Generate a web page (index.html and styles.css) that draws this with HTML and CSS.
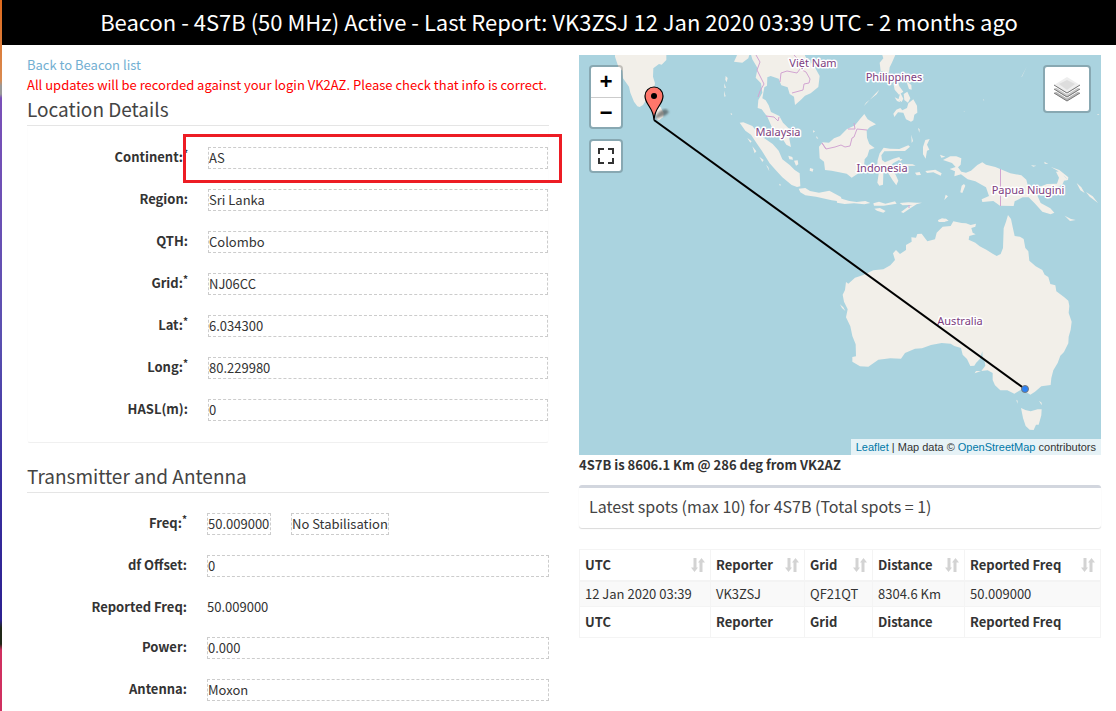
FILE: index.html
```html
<!DOCTYPE html>
<html lang="en">
<head>
<meta charset="utf-8">
<title>Beacon - 4S7B</title>
<link rel="stylesheet" href="styles.css">
</head>
<body>
<svg class="defs" aria-hidden="true">
  <symbol id="sort" viewBox="0 0 14 14"><path d="M2.500 0h3v9.500H7L3.500 14 0 9.500h2.500zM8.500 14h3V4.500H14L10.500 0 7 4.500h1.500z"/></symbol>
</svg>
<header class="title-bar"><h1>Beacon - 4S7B (50 MHz) Active - Last Report: VK3ZSJ 12 Jan 2020 03:39 UTC - 2 months ago</h1></header>
<main class="columns">
  <section class="column">
    <a class="back" href="#">Back to Beacon list</a>
    <p class="warning">All updates will be recorded against your login VK2AZ. Please check that info is correct.</p>
    <h2 class="section-title">Location Details</h2>
    <form class="fields boxed">
      <div class="row marked"><label for="continent">Continent:<sup>*</sup></label><input id="continent" value="AS"></div>
      <div class="row"><label for="region">Region:</label><input id="region" value="Sri Lanka"></div>
      <div class="row"><label for="qth">QTH:</label><input id="qth" value="Colombo"></div>
      <div class="row"><label for="grid">Grid:<sup>*</sup></label><input id="grid" value="NJ06CC"></div>
      <div class="row"><label for="lat">Lat:<sup>*</sup></label><input id="lat" value="6.034300"></div>
      <div class="row"><label for="long">Long:<sup>*</sup></label><input id="long" value="80.229980"></div>
      <div class="row"><label for="hasl">HASL(m):</label><input id="hasl" value="0"></div>
    </form>
    <h2 class="section-title second">Transmitter and Antenna</h2>
    <form class="fields">
      <div class="row"><label for="freq">Freq:<sup>*</sup></label><div class="pair"><input id="freq" class="freq" value="50.009000"><input class="stability" aria-label="Stabilisation" value="No Stabilisation"></div></div>
      <div class="row"><label for="offset">df Offset:</label><input id="offset" value="0"></div>
      <div class="row"><label for="reported">Reported Freq:</label><output id="reported">50.009000</output></div>
      <div class="row"><label for="power">Power:</label><input id="power" value="0.000"></div>
      <div class="row"><label for="antenna">Antenna:</label><input id="antenna" value="Moxon"></div>
    </form>
  </section>
  <section class="column">
    <div class="map">
      <svg class="map-canvas" viewBox="579 55 522 400" preserveAspectRatio="xMidYMid slice" role="img" aria-label="Map from Sri Lanka to Australia">
        <defs><filter id="soft"><feGaussianBlur stdDeviation="1"/></filter></defs>
        <rect x="-500" y="55" width="3000" height="400" fill="#aad3df"/>
        <g class="land" transform="translate(579 50) scale(.33333)">
          <path d="M108 0L108 20 118 50 130 62 132 85 150 110 154 128 165 155 175 169 182 171 192 165 198 155 208 150 223 125 228 100 222 80 223 55 240 42 248 44 262 30 262 0z"/>
          <path d="M233 160L245 172 254 188 253 201 240 211 233 207 230 185z"/>
          <path d="M465 35L472 20 480 0 515 0 508 25 490 38z"/>
          <path d="M512 0L520 28 536 55 530 83 546 100 550 128 538 150 536 174 548 178 565 200 578 230 600 250 622 284 636 291 631 267 632 238 612 218 601 198 576 186 569 166 560 151 550 145 556 112 564 107 565 82 575 78 599 86 607 106 626 112 632 132 645 140 648 165 666 149 678 137 695 130 718 111 722 78 705 47 682 25 670 0z"/>
          <path d="M482 218L493 217 520 228 537 248 556 265 581 282 599 302 610 328 633 346 647 360 662 370 664 409 654 411 638 405 610 382 592 362 572 340 549 303 532 278 516 254 499 242z"/>
          <path d="M659 416L679 414 693 423 720 428 751 422 786 441 790 455 758 451 711 440 679 436 664 427z"/>
          <path d="M645 332L656 331 658 343 651 347zM628 317L640 321 642 329 631 328zM693 354L703 357 701 365 692 362zM505 264L518 274 514 278zM520 289L532 304 527 310zM541 320L554 330 550 336zM561 344L568 352 571 364zM440 78L446 84 443 97 439 89zM435 122L440 139 436 140zM436 100L441 114 436 113zM455 188L460 193 456 195zM600 401L606 404 603 408zM702 241L708 244 703 248zM713 258L718 267 712 264z"/>
        </g>
        <g class="land" transform="translate(840 50) scale(.33333)">
          <path d="M-63 290L-52 277-33 278-18 265 0 258 20 238 45 226 60 207 73 192 83 208 108 223 90 231 80 241 81 263 88 282 104 294 88 299 82 319 74 328 72 350 52 372 35 383 20 371 5 368-25 362-45 360-48 335-61 325z"/>
          <path d="M122 0L130 25 119 38 122 63 147 68 149 52 155 40 166 15 164 0zM78 158L110 133 118 119 106 131 72 168zM160 100L174 96 178 109 190 125 177 134 164 119zM181 128L190 146 185 156 175 149zM191 132L202 125 211 145 204 158 193 150zM199 94L214 105 215 119 207 117zM160 191L169 179 181 174 187 181 201 174 205 160 220 148 231 167 232 188 223 194 220 211 213 215 198 208 190 188 174 187 163 201zM164 142L175 147 181 157 171 153z"/>
          <path d="M119 310L131 293 150 296 178 297 205 286 210 290 195 303 169 303 133 304 124 316 126 330 135 337 160 326 178 321 181 328 159 340 150 351 167 374 175 392 169 406 158 391 143 367 137 359 130 371 129 404 118 407 112 398 116 371 111 353 113 330z"/>
          <path d="M249 291L256 270 269 267 261 284 268 299 261 302 257 326 249 313zM225 368L239 366 243 375 230 376zM256 363L286 359 305 370 302 377 280 367 261 369zM187 342L218 343 227 347 190 348zM174 326L188 327 181 334zM300 314L316 320 304 323zM365 407L372 402 376 407 367 429 361 427zM317 434L324 439 313 450zM234 234L239 238 238 248zM214 254L219 273 215 279z"/>
          <path d="M309 330L331 319 349 319 364 325 362 344 354 352 364 365 378 368 393 362 412 345 427 337 438 344 466 351 511 370 544 376 559 389 563 405 583 419 590 432 602 459 631 475 643 488 632 493 607 485 584 460 566 442 548 442 524 454 521 468 480 467 460 453 427 456 425 448 447 438 438 412 406 394 383 388 363 373 343 379 345 364 329 357 347 351 336 339z"/>
          <path d="M600 410L621 402 651 401 657 383 648 365 661 364 675 382 684 390 672 392 667 404 646 414 611 421zM633 351L658 360 685 382 684 390 664 369zM710 399L724 412 734 429 721 421zM738 426L758 439 774 459 749 440zM674 497L693 507 707 510 690 513zM573 346L589 347 580 350zM613 335L625 342 614 341z"/>
          <path d="M-10 448L5 446 28 453 50 456 76 453 91 459 73 463 42 460 14 462-9 458zM100 460L117 455 136 461 165 454 170 461 131 467 102 467zM179 459L205 457 230 458 246 458 224 464 188 466zM103 476L120 474 137 483 130 488 111 482zM183 486L207 468 232 461 212 474 190 489z"/>
          <path d="M294 511L306 505 320 507 314 516 298 514zM371 183L373 183 373 186zM544 82L560 50 546 80zM429 148L433 151 429 151zM770 193L778 192 775 195z"/>
        </g>
        <g class="land" transform="translate(820 200) scale(.33333)">
          <path d="M75 270L78 246 85 251 105 233 130 225 160 211 190 208 211 196 225 180 219 160 228 150 240 162 258 150 258 135 275 125 274 112 288 113 292 102 305 101 322 124 345 118 350 98 368 80 392 78 400 64 425 69 438 70 452 75 468 71 466 80 454 84 458 98 467 103 448 108 446 119 466 128 479 139 499 149 518 161 530 168 542 162 549 144 551 85 558 65 564 45 573 57 578 81 584 108 600 110 611 117 616 144 625 154 628 182 647 199 667 210 674 224 685 231 691 252 706 256 709 274 732 291 745 302 748 318 746 339 755 365 752 389 746 410 745 430 732 456 721 467 713 489 700 511 694 534 692 555 664 559 645 575 631 584 620 577 605 568 583 581 562 571 541 571 525 556 518 540 518 519 503 511 483 513 464 520 468 513 484 513 496 497 493 478 488 476 487 454 480 476 468 489 463 497 451 498 441 477 428 464 423 444 403 438 392 431 365 429 333 435 306 445 285 446 255 459 243 476 211 475 175 479 145 500 120 499 97 485 97 471 108 469 107 433 97 408 91 379 78 352 83 328 72 305 68 284z"/>
          <path d="M603 624L616 630 632 634 653 628 665 628 664 646 656 674 648 674 641 690 629 689 617 678 609 654zM657 602L665 608 665 616zM589 599L593 602 592 611zM60 313L70 322 76 333 66 324zM354 60L378 56 386 62 370 66 356 66z"/>
        </g>
        <g class="borders">
          <path d="M756 55L760 62 757 70 764 84 760 91 758 97M766 116L774 117 778 121 779 117M780 82L781 73 787 71 797 73 800 69 806 72 810 79 809 83 804 84 803 90 792 93M794 55L805 67M822 143L826 149 835 147 841 145 845 147 850 146 852 138 854 137 857 129 867 130M854 123L855 129 848 129M1000.500 169v37M909 205v3M822 143L826 149"/>
        </g>
        <g class="places">
          <text x="813" y="67">Việt Nam</text>
          <text x="894" y="81">Philippines</text>
          <text x="778" y="136">Malaysia</text>
          <text x="882" y="172">Indonesia</text>
          <text x="1028" y="194">Papua Niugini</text>
          <text x="960" y="325">Australia</text>
        </g>
        <path d="M655 119C656 114 660 110 666 109L669 112 666 115z" fill="#333" opacity=".55" filter="url(#soft)"/>
        <path d="M654 120L1025 389" stroke="#000" stroke-width="2"/>
        <path d="M654 120C653.500 107 645 105 645 96A9 9 0 0 1 663 96C663 105 654.500 107 654 120z" fill="#ff776b" stroke="#000" stroke-width="1.200"/>
        <circle cx="654" cy="96" r="3"/>
        <circle cx="1025" cy="389" r="3.500" fill="#2b82f6" stroke="#777" stroke-width="1"/>
      </svg>
      <div class="controls left">
        <div class="control"><button type="button" class="zoom" aria-label="Zoom in">+</button><button type="button" class="zoom" aria-label="Zoom out">−</button></div>
        <div class="control"><button type="button" aria-label="Full screen"><svg width="16" height="16" viewBox="0 0 16 16"><path d="M1 6V1h5M10 1h5v5M15 10v5h-5M6 15H1v-5" fill="none" stroke="#333" stroke-width="2"/></svg></button></div>
      </div>
      <div class="controls right">
        <div class="control"><button type="button" class="layers" aria-label="Layers"><svg width="26" height="26" viewBox="0 0 26 26"><path d="M0 17L13 9l13 8-13 8z" fill="#b5b5b5"/><path d="M0 17l13 8 13-8" fill="none" stroke="#777"/><path d="M0 13L13 5l13 8-13 8z" fill="#c8c8c8"/><path d="M0 14l13 8 13-8" fill="none" stroke="#fff"/><path d="M0 13l13 8 13-8" fill="none" stroke="#777"/><path d="M0 9L13 1l13 8-13 8z" fill="#eee"/><path d="M5 8l8-4 8 4-8 6z" fill="#ddd"/><path d="M0 10l13 8 13-8" fill="none" stroke="#fff"/><path d="M0 9l13 8 13-8" fill="none" stroke="#777"/></svg></button></div>
      </div>
      <div class="attribution"><a href="#">Leaflet</a> | Map data © <a href="#">OpenStreetMap</a> contributors</div>
    </div>
    <p class="distance">4S7B is 8606.1 Km @ 286 deg from VK2AZ</p>
    <h3 class="spots-title">Latest spots (max 10) for 4S7B (Total spots = 1)</h3>
    <table class="spots">
      <colgroup><col class="c-utc"><col class="c-reporter"><col class="c-grid"><col class="c-distance"><col></colgroup>
      <thead><tr>
        <th scope="col"><div>UTC<svg><use href="#sort"/></svg></div></th>
        <th scope="col"><div>Reporter<svg><use href="#sort"/></svg></div></th>
        <th scope="col"><div>Grid<svg><use href="#sort"/></svg></div></th>
        <th scope="col"><div>Distance<svg><use href="#sort"/></svg></div></th>
        <th scope="col"><div>Reported Freq<svg><use href="#sort"/></svg></div></th>
      </tr></thead>
      <tbody><tr><td>12 Jan 2020 03:39</td><td>VK3ZSJ</td><td>QF21QT</td><td>8304.6 Km</td><td>50.009000</td></tr></tbody>
      <tfoot><tr><th>UTC</th><th>Reporter</th><th>Grid</th><th>Distance</th><th>Reported Freq</th></tr></tfoot>
    </table>
  </section>
</main>
</body>
</html>
```

FILE: styles.css
```css
* { box-sizing: border-box; }

html {
  min-height: 100%;
  background: linear-gradient(#e06a1c 0, #d98a50 80px, #999 86px, #999 94px, #7a50b8 98px, #5a50b0 340px, #3a30a0 480px, #2c2090 620px, #202818 628px, #202818 644px, #d03060 650px) left top / 2px 711px no-repeat #fff;
}

body {
  margin: 0 0 0 2px;
  background: #fff;
  color: #333;
  font: 13px/20px "Noto Sans CJK SC", "Noto Sans", sans-serif;
  overflow-x: hidden;
}

h1, h2, h3, p { margin: 0; font-weight: 400; }

.defs { display: none; }

.title-bar {
  height: 45px;
  background: #000;
  color: #fff;
  text-align: center;
}

.title-bar h1 { font-size: 22px; line-height: 42px; }

.columns {
  display: grid;
  grid-template-columns: minmax(0, 1fr) minmax(0, 1fr);
  padding: 10px 0 0 10px;
}

.column { padding: 0 15px; }

.back { display: block; color: #72afd2; text-decoration: none; }

.warning { color: #f00; }

.section-title {
  padding-bottom: 2px;
  color: #444;
  font-size: 19px;
  line-height: 28px;
  border-bottom: 1px solid #e5e5e5;
}

.second { margin-top: 19px; }

.fields { padding-top: 20px; }

.boxed {
  padding-bottom: 1px;
  border: 1px solid #fdfdfd;
  border-top-color: transparent;
  border-bottom-color: #f0f0f0;
  border-radius: 3px;
}

.row {
  position: relative;
  display: grid;
  grid-template-columns: 160px minmax(0, 1fr);
  column-gap: 20px;
  margin-bottom: 20px;
}

.row label { text-align: right; font-weight: 700; }

sup { font-size: 10px; line-height: 0; vertical-align: 5px; }

input {
  width: 100%;
  height: 22px;
  margin: 0;
  padding: 0 0 2px;
  border: 1px dashed #ccc;
  background: transparent;
  color: inherit;
  font: inherit;
}

.marked::after {
  content: "";
  position: absolute;
  inset: -13px -14px -14px 155px;
  border: 3px solid #ed1c24;
  pointer-events: none;
}

.pair { display: flex; gap: 20px; }

.freq { width: 64px; }

.stability { width: 98px; }

.map { position: relative; height: 400px; overflow: hidden; }

.map-canvas { display: block; width: 100%; height: 100%; }

.land { fill: #f2efe9; }

.borders { fill: none; stroke: #d2a5d2; stroke-width: 1; }

.places {
  fill: #7d4080;
  stroke: #fff;
  stroke-width: 3;
  stroke-linejoin: round;
  paint-order: stroke;
  font: 11px "Noto Sans", sans-serif;
  text-anchor: middle;
}

.controls {
  position: absolute;
  top: 10px;
  display: grid;
  gap: 10px;
}

.left { left: 10px; }

.right { right: 10px; }

.control {
  border: 2px solid rgba(0, 0, 0, .2);
  border-radius: 4px;
  background: #fff;
  background-clip: padding-box;
}

.control button {
  display: flex;
  align-items: center;
  justify-content: center;
  width: 30px;
  height: 30px;
  padding: 0;
  border: 0;
  background: none;
  color: #000;
  font: 700 22px/30px "Liberation Mono", monospace;
}

.control .zoom { padding-top: 4px; }

.control button + button { border-top: 1px solid #ccc; }

.control .layers { width: 44px; height: 44px; }

.attribution {
  position: absolute;
  right: 0;
  bottom: 0;
  padding: 0 5px;
  background: rgba(255, 255, 255, .7);
  font: 11px/16px "Liberation Sans", sans-serif;
}

.attribution a { color: #0078a8; text-decoration: none; }

.distance { font-weight: 700; }

.spots-title {
  margin: 10px 0 21px;
  padding: 8px 10px 12px;
  border-top: 3px solid #d2d6de;
  border-radius: 3px;
  box-shadow: 0 1px 1px rgba(0, 0, 0, .15);
  color: #444;
  font-size: 16px;
  line-height: 20px;
}

.spots {
  width: 100%;
  border-collapse: separate;
  border-spacing: 0;
  border: 1px solid #f4f4f4;
  border-right: 0;
  table-layout: fixed;
}

.c-utc { width: 131px; }
.c-reporter { width: 94px; }
.c-grid { width: 68px; }
.c-distance { width: 92px; }

.spots th, .spots td {
  padding: 5px;
  border-right: 1px solid #f4f4f4;
  text-align: left;
  white-space: nowrap;
}

.spots thead th { border-bottom: 2px solid #f4f4f4; }

.spots thead div { display: flex; align-items: center; justify-content: space-between; }

.spots svg { width: 14px; height: 14px; fill: #d3d3d3; }

.spots td { padding: 2px 5px; background: #f9f9f9; border-bottom: 1px solid #f4f4f4; }
```
